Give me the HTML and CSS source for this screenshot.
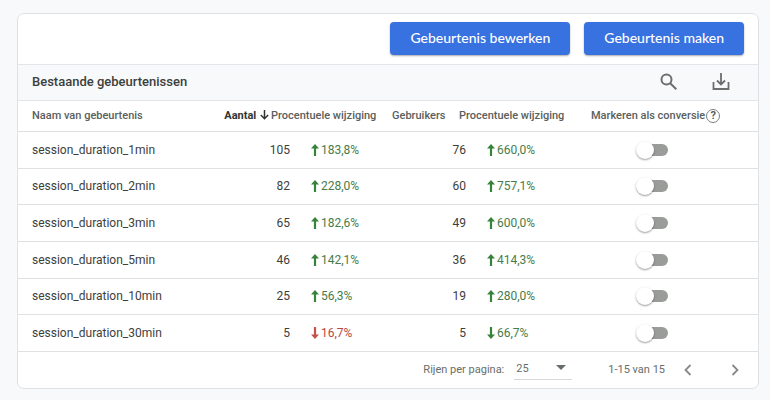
FILE: index.html
```html
<!DOCTYPE html>
<html lang="nl">
<head>
<meta charset="utf-8">
<title>Gebeurtenissen</title>
<link rel="stylesheet" href="styles.css">
</head>
<body>
<svg class="sprite" aria-hidden="true">
  <symbol id="up" viewBox="0 0 8 12"><path d="M4 0 8 4.5H5.1V12H2.9V4.5H0Z"/></symbol>
  <symbol id="down" viewBox="0 0 8 12"><path d="M4 12 8 7.5H5.1V0H2.9V7.5H0Z"/></symbol>
</svg>
<main class="card">
  <div class="actions">
    <button class="primary" type="button">Gebeurtenis bewerken</button>
    <button class="primary" type="button">Gebeurtenis maken</button>
  </div>
  <div class="toolbar">
    <h1 class="title">Bestaande gebeurtenissen</h1>
    <button class="icon-button" type="button" aria-label="Zoeken">
      <svg width="18" height="18" viewBox="0 0 18 18" fill="none" stroke="currentColor" stroke-width="2"><circle cx="6.5" cy="6.5" r="5"/><path d="M10.2 10.2 16.3 16.3"/></svg>
    </button>
    <button class="icon-button" type="button" aria-label="Downloaden">
      <svg width="18" height="18" viewBox="0 0 18 18" fill="none" stroke="currentColor" stroke-width="1.8"><path d="M9 0V11M5 7.5 9 11.5 13 7.5M1.5 9V16H16.5V9"/></svg>
    </button>
  </div>
  <table class="events">
    <colgroup>
      <col><col class="c-count"><col class="c-inset"><col class="c-change"><col class="c-users"><col class="c-inset"><col class="c-change-wide"><col class="c-toggle">
    </colgroup>
    <thead>
      <tr>
        <th class="name" scope="col">Naam van gebeurtenis</th>
        <th class="num sorted" scope="col" aria-sort="descending">Aantal <svg width="9" height="10" viewBox="0 0 9 10" fill="none" stroke="currentColor" stroke-width="1.5"><path d="M4.5 0V8.5M.8 5 4.5 8.7 8.2 5"/></svg></th>
        <th scope="col" colspan="2">Procentuele wijziging</th>
        <th class="users" scope="col">Gebruikers</th>
        <th class="change-head" scope="col" colspan="2">Procentuele wijziging</th>
        <th class="mark" scope="col">Markeren als conversie<span class="help">?</span></th>
      </tr>
    </thead>
    <tbody>
      <tr><td class="name">session_duration_1min</td><td class="num" colspan="2">105</td><td class="change"><svg class="arrow"><use href="#up"/></svg>183,8%</td><td class="num" colspan="2">76</td><td class="change"><svg class="arrow"><use href="#up"/></svg>660,0%</td><td class="toggle-cell"><input class="toggle" type="checkbox" role="switch" aria-label="session_duration_1min"></td></tr>
      <tr><td class="name">session_duration_2min</td><td class="num" colspan="2">82</td><td class="change"><svg class="arrow"><use href="#up"/></svg>228,0%</td><td class="num" colspan="2">60</td><td class="change"><svg class="arrow"><use href="#up"/></svg>757,1%</td><td class="toggle-cell"><input class="toggle" type="checkbox" role="switch" aria-label="session_duration_2min"></td></tr>
      <tr><td class="name">session_duration_3min</td><td class="num" colspan="2">65</td><td class="change"><svg class="arrow"><use href="#up"/></svg>182,6%</td><td class="num" colspan="2">49</td><td class="change"><svg class="arrow"><use href="#up"/></svg>600,0%</td><td class="toggle-cell"><input class="toggle" type="checkbox" role="switch" aria-label="session_duration_3min"></td></tr>
      <tr><td class="name">session_duration_5min</td><td class="num" colspan="2">46</td><td class="change"><svg class="arrow"><use href="#up"/></svg>142,1%</td><td class="num" colspan="2">36</td><td class="change"><svg class="arrow"><use href="#up"/></svg>414,3%</td><td class="toggle-cell"><input class="toggle" type="checkbox" role="switch" aria-label="session_duration_5min"></td></tr>
      <tr><td class="name">session_duration_10min</td><td class="num" colspan="2">25</td><td class="change"><svg class="arrow"><use href="#up"/></svg>56,3%</td><td class="num" colspan="2">19</td><td class="change"><svg class="arrow"><use href="#up"/></svg>280,0%</td><td class="toggle-cell"><input class="toggle" type="checkbox" role="switch" aria-label="session_duration_10min"></td></tr>
      <tr><td class="name">session_duration_30min</td><td class="num" colspan="2">5</td><td class="change negative"><svg class="arrow"><use href="#down"/></svg>16,7%</td><td class="num" colspan="2">5</td><td class="change"><svg class="arrow"><use href="#down"/></svg>66,7%</td><td class="toggle-cell"><input class="toggle" type="checkbox" role="switch" aria-label="session_duration_30min"></td></tr>
    </tbody>
  </table>
  <div class="pager">
    <label for="rows">Rijen per pagina:</label>
    <span class="select-wrap">
      <select id="rows" class="rows"><option>25</option></select>
      <svg class="caret" width="10" height="5" viewBox="0 0 10 5"><path d="M0 0H10L5 5Z"/></svg>
    </span>
    <span class="range">1-15 van 15</span>
    <button class="icon-button step" type="button" aria-label="Vorige"><svg width="8" height="12" viewBox="0 0 8 12" fill="none" stroke="currentColor" stroke-width="1.8"><path d="M6.5 1 1.5 6 6.5 11"/></svg></button>
    <button class="icon-button step" type="button" aria-label="Volgende"><svg width="8" height="12" viewBox="0 0 8 12" fill="none" stroke="currentColor" stroke-width="1.8"><path d="M1.5 1 6.5 6 1.5 11"/></svg></button>
  </div>
</main>
</body>
</html>
```
FILE: styles.css
```css
* { box-sizing: border-box; }
body {
  margin: 0;
  padding: 13px 11px 11px 17px;
  background: #f8f9fb;
  color: #3c403d;
  font: 12px/16px Roboto, sans-serif;
}
.sprite { position: absolute; width: 0; height: 0; }
.card {
  background: #fff;
  border: 1px solid #dfe1e5;
  border-radius: 7px;
  overflow: hidden;
}
.actions {
  display: flex;
  justify-content: flex-end;
  gap: 14px;
  padding: 8px 14px 9px;
  border-bottom: 1px solid #e3e5e8;
}
.primary {
  height: 33px;
  padding: 0 20px 2px;
  border: 0;
  border-radius: 4px;
  background: #3871e0;
  color: #fff;
  font: 500 14px/20px Lato, sans-serif;
  box-shadow: 0 1px 2px rgba(0, 0, 0, .35);
}
.toolbar {
  display: flex;
  align-items: center;
  gap: 24px;
  height: 36px;
  padding: 0 23px 0 14px;
  background: #f8f9fb;
  border-bottom: 1px solid #e3e5e8;
}
.title {
  flex: 1;
  margin: 0;
  padding-bottom: 2px;
  font: 500 13px/20px Roboto, sans-serif;
}
.icon-button {
  display: grid;
  place-items: center;
  width: 28px;
  height: 28px;
  padding: 0 0 2px;
  border: 0;
  background: none;
  color: #6b706c;
}
.events {
  width: 100%;
  height: 251px;
  table-layout: fixed;
  border-collapse: separate;
  border-spacing: 0;
}
.c-count { width: 71px; }
.c-inset { width: 19px; }
.c-change { width: 88px; }
.c-users { width: 69px; }
.c-change-wide { width: 109px; }
.c-toggle { width: 183px; }
th, td {
  padding: 0;
  border-bottom: 1px solid #dfe1e5;
  text-align: left;
  white-space: nowrap;
}
th {
  height: 31px;
  color: #5a605c;
  font-size: 11px;
  font-weight: 500;
}
.name { padding-left: 14px; }
.num { text-align: right; }
.sorted { padding-right: 2px; color: #303431; font-weight: 700; }
.sorted svg { margin-left: 1px; vertical-align: -1px; }
.users { padding-left: 14px; }
.change-head { padding-left: 12px; }
.mark { padding-left: 16px; }
.help {
  display: inline-block;
  width: 14px;
  height: 14px;
  margin-left: 1px;
  border: 1px solid #7d827e;
  border-radius: 50%;
  font-weight: 700;
  line-height: 12px;
  text-align: center;
}
.change { padding-left: 21px; color: #477c4a; }
.arrow {
  width: 8px;
  height: 12px;
  margin-right: 2px;
  fill: #37833c;
  vertical-align: -2px;
}
.negative { color: #b9473f; }
.negative .arrow { fill: #c4524a; }
.toggle-cell { padding-left: 67px; }
.toggle {
  appearance: none;
  display: flex;
  align-items: center;
  width: 26px;
  height: 12px;
  margin: 0;
  background: #999c99;
  border-radius: 6px;
}
.toggle::before {
  content: "";
  width: 18px;
  height: 18px;
  margin-left: -6px;
  border-radius: 50%;
  background: #fff;
  box-shadow: 0 1px 2px rgba(0, 0, 0, .4);
}
.toggle:checked { justify-content: flex-end; }
.pager {
  display: flex;
  align-items: center;
  justify-content: flex-end;
  height: 36px;
  padding-right: 9px;
  color: #686e6a;
  font-size: 11px;
}
.select-wrap {
  display: flex;
  align-items: center;
  margin: 0 36px 0 10px;
  border-bottom: 1px solid #d5d8d6;
}
.rows {
  appearance: none;
  width: 42px;
  height: 19px;
  padding: 0 2px 2px;
  border: 0;
  background: none;
  color: inherit;
  font: inherit;
}
.caret { margin: 0 6px 4px 0; fill: #686e6a; }
.step { padding: 0; color: #858a86; }
.step + .step { margin-left: 19px; }
.range { margin-right: 9px; }
```
